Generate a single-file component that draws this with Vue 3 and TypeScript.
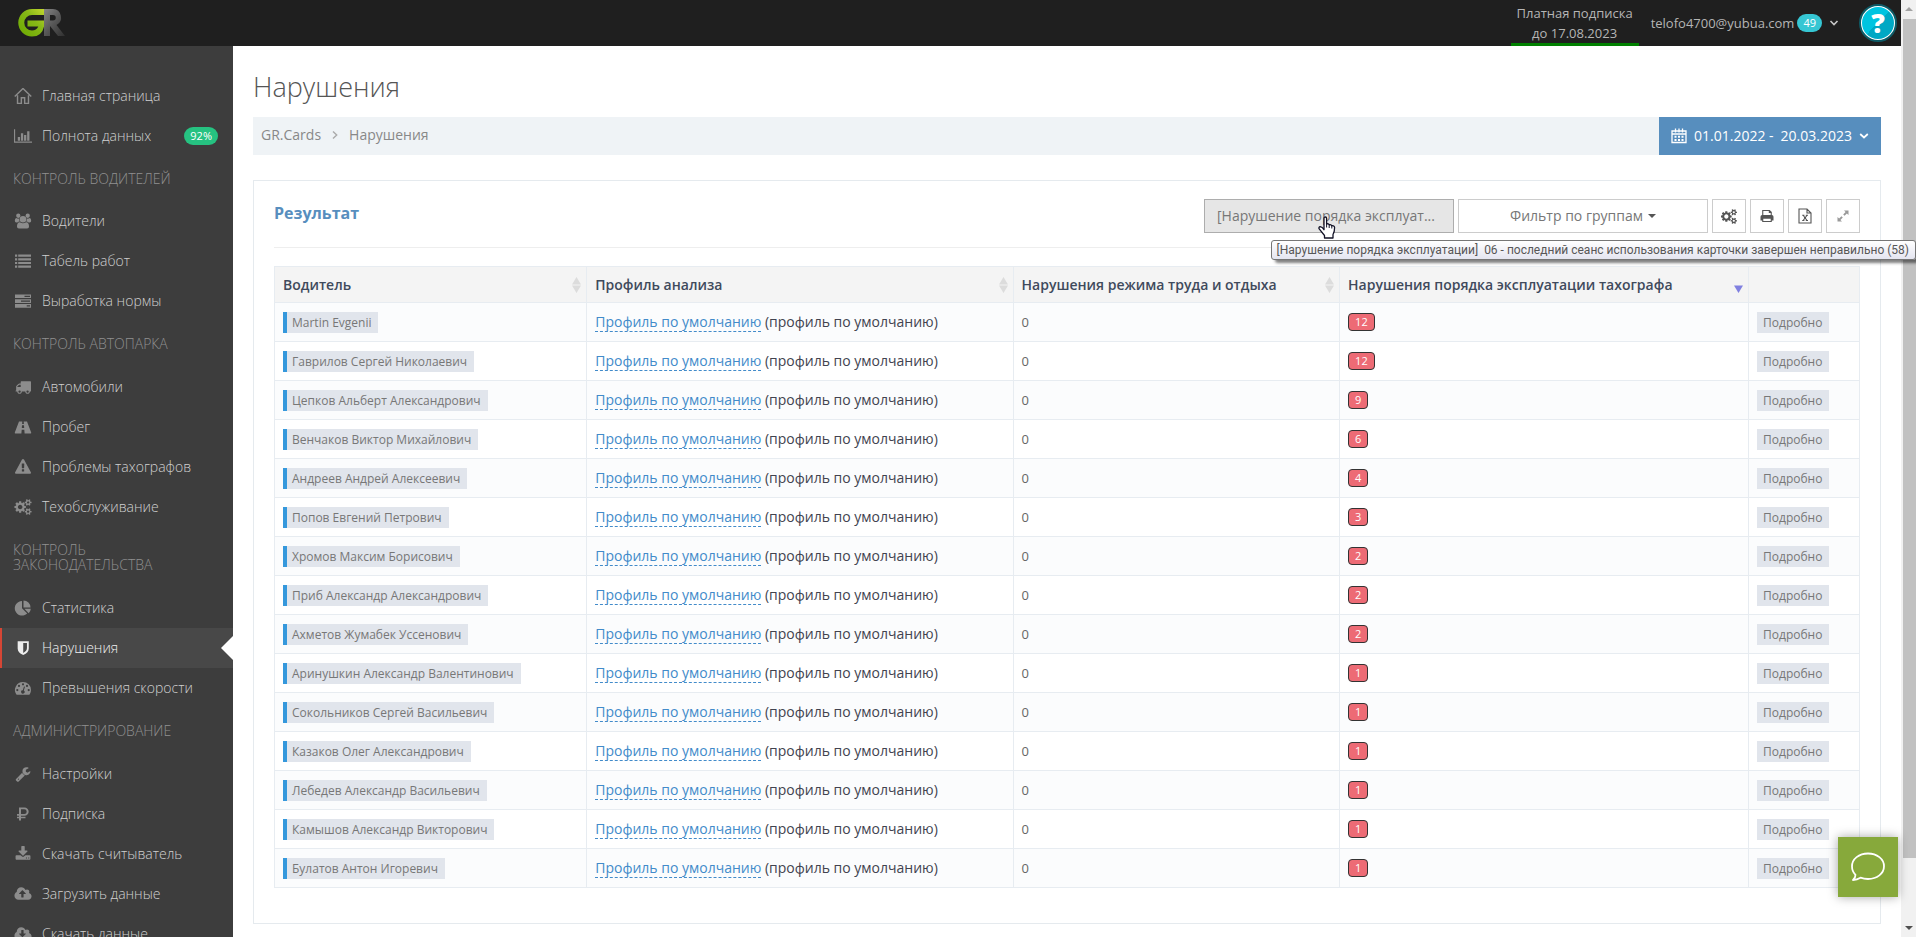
<script setup lang="ts">
import { ref } from 'vue'

type Item = { label: string; icon: string; badge?: string; active?: boolean }
type Group = { title?: string; items: Item[] }

const COGS_GEAR =
  'M896 896q0-106-75-181t-181-75-181 75-75 181 75 181 181 75 181-75 75-181zm768 512q0-52-38-90t-90-38-90 38-38 90q0 53 37.5 90.5t90.5 37.5 90.5-37.5 37.5-90.5zm0-1024q0-52-38-90t-90-38-90 38-38 90q0 53 37.5 90.5t90.5 37.5 90.5-37.5 37.5-90.5zm-384 421v185q0 10-7 19.5t-16 10.5l-155 24q-11 35-32 76 34 48 90 115 7 11 7 20 0 12-7 19-23 30-82.5 89.5t-78.5 59.5q-11 0-21-7l-115-90q-37 19-77 31-11 108-23 155-7 24-30 24h-186q-11 0-20-7.5t-10-17.5l-23-153q-34-10-75-31l-118 89q-7 7-20 7-11 0-21-8-144-133-144-160 0-9 7-19 10-14 41-53t47-61q-23-44-35-82l-152-24q-10-1-17-9.5t-7-19.5v-185q0-10 7-19.5t16-10.5l155-24q11-35 32-76-34-48-90-115-7-11-7-20 0-12 7-20 22-30 82-89t79-59q11 0 21 7l115 90q34-18 77-32 11-108 23-154 7-24 30-24h186q11 0 20 7.5t10 17.5l23 153q34 10 75 31l118-89q8-7 20-7 11 0 21 8 144 133 144 160 0 8-7 19-12 16-42 54t-45 60q23 48 34 82l152 23q10 2 17 10.5t7 19.5zm640 533v140q0 16-149 31-12 27-30 52 51 113 51 138 0 4-4 7-122 71-124 71-8 0-46-47t-52-68q-20 2-30 2t-30-2q-14 21-52 68t-46 47q-2 0-124-71-4-3-4-7 0-25 51-138-18-25-30-52-149-15-149-31v-140q0-16 149-31 13-29 30-52-51-113-51-138 0-4 4-7 4-2 35-20t59-34 30-16q8 0 46 46.5t52 67.5q20-2 30-2t30 2q51-71 92-112l6-2q4 0 124 70 4 3 4 7 0 25-51 138 17 23 30 52 149 15 149 31zm0-1024v140q0 16-149 31-12 27-30 52 51 113 51 138 0 4-4 7-122 71-124 71-8 0-46-47t-52-68q-20 2-30 2t-30-2q-14 21-52 68t-46 47q-2 0-124-71-4-3-4-7 0-25 51-138-18-25-30-52-149-15-149-31v-140q0-16 149-31 13-29 30-52-51-113-51-138 0-4 4-7 4-2 35-20t59-34 30-16q8 0 46 46.5t52 67.5q20-2 30-2t30 2q51-71 92-112l6-2q4 0 124 70 4 3 4 7 0 25-51 138 17 23 30 52 149 15 149 31z'
const CLOUD =
  'm640 288q0 159-112.5 271.5t-271.5 112.5h-1088q-185 0-316.5-131.5t-131.5-316.5q0-130 70-240t188-165q-2-30-2-43 0-212 150-362t362-150q156 0 285.5 87t188.5 231q71-62 166-62 106 0 181 75t75 181q0 76-41 138 130 31 213.5 135.5t83.5 238.5z'

const icons: Record<string, { box: string; d: string; line?: boolean }> = {
  home: { box: '0.5 1.500 17 15.500', line: true, d: 'M1 9.700 9 2l8 7.700M3.700 8.500v7.900h3.700V11h3.200v5.400h3.700V8.500' },
  chart: { box: '0 0 19 16', d: 'M0 1h1.200v12.800H19V15H0zM4 9h2.400v4H4zM7.300 5h2.400v8H7.300zM10.600 7H13v6h-2.400zM13.900 3h2.400v10h-2.400zM4 9z' },
  users: { box: '0 0 18 17', d: 'M9 3.200a3.500 3.500 0 1 1 0 7 3.500 3.500 0 0 1 0-7zM4 .6a2.300 2.300 0 1 1 0 4.600 2.300 2.300 0 0 1 0-4.600zM14 .6a2.300 2.300 0 1 1 0 4.600 2.300 2.300 0 0 1 0-4.600zM2 5.300q2 1.300 3 .2a4.600 4.600 0 0 0 .6 3.500Q4 9 3 10H1.800Q.3 10 .3 8.300q0-2.800 1.700-3zM16 5.300q-2 1.300-3 .2a4.600 4.600 0 0 1-.6 3.500q1.600 0 2.600 1h1.200q1.500 0 1.500-1.700 0-2.800-1.700-3zM5.600 9.700q3.400 2.400 6.800 0 3 .2 3 4.700 0 2.200-2 2.200H4.600q-2 0-2-2.200 0-4.500 3-4.700z' },
  list: { box: '0 0 18 16', d: 'M1 1.500h2.200v2.200H1zM1 5.200h2.200v2.200H1zM1 8.900h2.200v2.200H1zM1 12.600h2.200v2.200H1zM4.200 1.500H17v2.200H4.200zM4.200 5.200H17v2.200H4.200zM4.200 8.900H17v2.200H4.200zM4.200 12.600H17v2.200H4.200z' },
  tasks: { box: '0 0 18 16', d: 'M1 1.500h16v3.600H1zM10.500 2.700v1.200h5.500V2.700zM1 6.300h16v3.600H1zM7 7.500v1.200h9V7.500zM1 11.100h16v3.600H1zM12.700 12.300v1.200H16v-1.200z' },
  truck: { box: '0 0 1792 1792', d: 'M640 1408q0-52-38-90t-90-38-90 38-38 90 38 90 90 38 90-38 38-90zm-384-512h384v-256h-158q-13 0-22 9l-195 195q-9 9-9 22v30zm1280 512q0-52-38-90t-90-38-90 38-38 90 38 90 90 38 90-38 38-90zm256-1088v1024q0 15-4 26.500t-13.500 18.500-16.500 11.500-23.500 6-22.500 2-25.500 0-22.500-.5q0 106-75 181t-181 75-181-75-75-181h-384q0 106-75 181t-181 75-181-75-75-181h-64q-3 0-22.500.5t-25.500 0-22.500-2-23.500-6-16.500-11.500-13.500-18.500-4-26.500q0-26 19-45t45-19v-320q0-8-.5-35t0-38 2.500-34.500 6.500-37 14-30.500 22.500-30l198-198q19-19 50.500-32t58.500-13h160v-192q0-26 19-45t45-19h1024q26 0 45 19t19 45z' },
  road: { box: '0 0 18 16', d: 'M5 2.500h3.300L8.100 5h1.800l-.2-2.500H13l4.200 11q.3 1-.6 1h-6l-.3-3.700H7.700l-.3 3.700h-6q-.9 0-.6-1zM8 6.200 7.800 9h2.400L10 6.200z' },
  warning: { box: '0 0 1792 1792', d: 'M1024 1375v-190q0-14-9.500-23.500t-22.500-9.500h-192q-13 0-22.500 9.500t-9.500 23.500v190q0 14 9.500 23.500t22.500 9.500h192q13 0 22.500-9.500t9.500-23.500zm-2-374l18-459q0-12-10-19-13-11-24-11h-220q-11 0-24 11-10 7-10 21l17 457q0 10 10 16.500t24 6.500h185q14 0 23.500-6.500t10.500-16.500zm-14-934l768 1408q35 63-2 126-17 29-46.500 46t-63.500 17h-1536q-34 0-63.500-17t-46.500-46q-37-63-2-126l768-1408q17-31 47-49t65-18 65 18 47 49z' },
  cogs: { box: '0 0 1920 1792', d: COGS_GEAR },
  pie: { box: '0 0 18 16', d: 'M8 1v7.300l5.200 5.200A7.300 7.300 0 1 1 8 1zM9.500.5a7 7 0 0 1 7 7h-7zM10.400 8.700h6.400a7 7 0 0 1-2.100 4.500z' },
  shield: { box: '0 0 18 18', d: 'M3 1.500h12.500v8q0 4.500-6.250 7.500Q3 14 3 9.500zM9.250 3.500v11q4.200-2.200 4.200-5.500V3.500z' },
  gauge: { box: '0 0 18 16', d: 'M9 2a8 8 0 0 1 8 8q0 2.400-1.200 4.300-.2.400-.7.400H2.900q-.5 0-.7-.4A8 8 0 0 1 9 2zM9 3.200a1.100 1.100 0 1 0 0 2.200 1.100 1.100 0 0 0 0-2.200zM5 4.800A1.100 1.100 0 1 0 5 7a1.100 1.100 0 0 0 0-2.200zM13 4.800A1.100 1.100 0 1 0 13 7a1.100 1.100 0 0 0 0-2.200zM3.300 9a1.100 1.100 0 1 0 0 2.200 1.100 1.100 0 0 0 0-2.200zM14.700 9a1.100 1.100 0 1 0 0 2.200 1.100 1.100 0 0 0 0-2.200zM10 6.500 8.800 10.200a1.700 1.700 0 1 0 1 .3L11 6.800z' },
  wrench: { box: '0 0 1792 1792', d: 'M448 1472q0-26-19-45t-45-19-45 19-19 45 19 45 45 19 45-19 19-45zm644-420l-682 682q-37 37-90 37-52 0-91-37l-106-108q-38-36-38-90 0-53 38-91l681-681q39 98 114.500 173.500t173.500 114.500zm634-435q0 39-23 106-47 134-164.500 217.500t-258.500 83.500q-185 0-316.500-131.500t-131.500-316.500 131.500-316.500 316.500-131.500q58 0 121.500 16.500t107.500 46.500q16 11 16 28t-16 28l-293 169v224l193 107q5-3 79-48.500t135.500-81 70.500-35.500q15 0 23.500 10t8.500 25z' },
  ruble: { box: '0 0 18 16', d: 'M5 1.500h5.500a4 4 0 0 1 0 8.300H7v1h4.500v1.500H7v2.200H5v-2.200H3v-1.500h2v-1H3V8.100h2zM7 3.300v4.800h3.300a2.400 2.400 0 0 0 0-4.800z' },
  download: { box: '0 0 1792 1792', d: 'M1344 1344q0-26-19-45t-45-19-45 19-19 45 19 45 45 19 45-19 19-45zm256 0q0-26-19-45t-45-19-45 19-19 45 19 45 45 19 45-19 19-45zm128-224v320q0 40-28 68t-68 28h-1472q-40 0-68-28t-28-68v-320q0-40 28-68t68-28h465l135 136q58 56 136 56t136-56l136-136h464q40 0 68 28t28 68zm-325-569q17 41-14 70l-448 448q-18 19-45 19t-45-19l-448-448q-31-29-14-70 17-39 59-39h256v-448q0-26 19-45t45-19h256q26 0 45 19t19 45v448h256q42 0 59 39z' },
  upcloud: { box: '0 0 1920 1792', d: 'M1280 864q0-14-9-23l-352-352q-9-9-23-9t-23 9l-351 351q-10 12-10 24 0 14 9 23t23 9h224v352q0 13 9.500 22.500t22.500 9.500h192q13 0 22.500-9.500t9.500-22.500v-352h224q13 0 22.500-9.500t9.500-22.500z' + CLOUD },
  downcloud: { box: '0 0 1920 1792', d: 'M1280 864q0 14-9 23l-352 352q-9 9-23 9t-23-9l-352-352q-9-12-9-23 0-32 32-32h224V480q0-32 32-32h192q32 0 32 32v352h224q32 0 32 32z' + CLOUD },
}

const groups: Group[] = [
  { items: [{ label: 'Главная страница', icon: 'home' }, { label: 'Полнота данных', icon: 'chart', badge: '92%' }] },
  {
    title: 'КОНТРОЛЬ ВОДИТЕЛЕЙ',
    items: [{ label: 'Водители', icon: 'users' }, { label: 'Табель работ', icon: 'list' }, { label: 'Выработка нормы', icon: 'tasks' }],
  },
  {
    title: 'КОНТРОЛЬ АВТОПАРКА',
    items: [
      { label: 'Автомобили', icon: 'truck' },
      { label: 'Пробег', icon: 'road' },
      { label: 'Проблемы тахографов', icon: 'warning' },
      { label: 'Техобслуживание', icon: 'cogs' },
    ],
  },
  {
    title: 'КОНТРОЛЬ ЗАКОНОДАТЕЛЬСТВА',
    items: [
      { label: 'Статистика', icon: 'pie' },
      { label: 'Нарушения', icon: 'shield', active: true },
      { label: 'Превышения скорости', icon: 'gauge' },
    ],
  },
  {
    title: 'АДМИНИСТРИРОВАНИЕ',
    items: [
      { label: 'Настройки', icon: 'wrench' },
      { label: 'Подписка', icon: 'ruble' },
      { label: 'Скачать считыватель', icon: 'download' },
      { label: 'Загрузить данные', icon: 'upcloud' },
      { label: 'Скачать данные', icon: 'downcloud' },
    ],
  },
]

const rows = ref<{ name: string; count: number }[]>([
  { name: 'Martin Evgenii', count: 12 },
  { name: 'Гаврилов Сергей Николаевич', count: 12 },
  { name: 'Цепков Альберт Александрович', count: 9 },
  { name: 'Венчаков Виктор Михайлович', count: 6 },
  { name: 'Андреев Андрей Алексеевич', count: 4 },
  { name: 'Попов Евгений Петрович', count: 3 },
  { name: 'Хромов Максим Борисович', count: 2 },
  { name: 'Приб Александр Александрович', count: 2 },
  { name: 'Ахметов Жумабек Уссенович', count: 2 },
  { name: 'Аринушкин Александр Валентинович', count: 1 },
  { name: 'Сокольников Сергей Васильевич', count: 1 },
  { name: 'Казаков Олег Александрович', count: 1 },
  { name: 'Лебедев Александр Васильевич', count: 1 },
  { name: 'Камышов Александр Викторович', count: 1 },
  { name: 'Булатов Антон Игоревич', count: 1 },
])

const columns = ['Водитель', 'Профиль анализа', 'Нарушения режима труда и отдыха', 'Нарушения порядка эксплуатации тахографа']
</script>

<template>
  <div class="shell">
    <div class="app">
      <header class="topbar">
        <a href="#" class="logo" aria-label="GR">
          <svg width="48" height="28" viewBox="0 0 48 28">
            <defs>
              <linearGradient id="logoGreen" x1="0" y1="1" x2="1" y2="0">
                <stop offset="0" stop-color="#6aa800" /><stop offset=".6" stop-color="#86b817" /><stop offset="1" stop-color="#c2d62e" />
              </linearGradient>
              <linearGradient id="logoGrey" x1="0" y1="0" x2="1" y2="1">
                <stop offset="0" stop-color="#858585" /><stop offset=".5" stop-color="#565656" /><stop offset="1" stop-color="#303030" />
              </linearGradient>
            </defs>
            <path fill="url(#logoGreen)" d="M14 0h12v6H14a7.600 7.600 0 0 0 0 15.500q4.500 0 6.300-4H9.500v-6H26v6Q24 27.500 14 27.500A13.700 13.700 0 0 1 14 0z" />
            <path fill="url(#logoGrey)" fill-rule="evenodd" d="M26 0h9a8.500 8.500 0 0 1 3.500 16L47 27h-7l-8-10v10h-6zM32 6v5.500h3a2.700 2.700 0 0 0 0-5.500z" />
          </svg>
        </a>
        <div class="topright">
          <a href="#" class="subscription"><span>Платная подписка</span><span>до 17.08.2023</span></a>
          <button class="user" type="button">
            <span>telofo4700@yubua.com</span><span class="count">49</span>
            <svg width="10" height="8" viewBox="0 0 10 8"><path d="M1.500 2 5 5.500 8.500 2" /></svg>
          </button>
          <button class="help" type="button" aria-label="Помощь">?</button>
        </div>
      </header>

      <div class="body">
        <nav class="sidebar">
          <template v-for="(g, gi) in groups" :key="gi">
            <h3 v-if="g.title">{{ g.title }}</h3>
            <ul>
              <li v-for="it in g.items" :key="it.label">
                <a href="#" :class="{ active: it.active }">
                  <svg class="icon" :viewBox="icons[it.icon].box"><path :d="icons[it.icon].d" :class="{ line: icons[it.icon].line }" fill-rule="evenodd" /></svg>
                  <span class="label">{{ it.label }}</span>
                  <span v-if="it.badge" class="percent">{{ it.badge }}</span>
                </a>
              </li>
            </ul>
          </template>
        </nav>

        <main>
          <h1>Нарушения</h1>
          <div class="crumbbar">
            <div class="crumbs">
              <a href="#">GR.Cards</a>
              <svg width="6" height="10" viewBox="0 0 6 10"><path d="M1 1.500 4.700 5 1 8.500" /></svg>
              <a href="#">Нарушения</a>
            </div>
            <button class="dates" type="button">
              <svg width="16" height="16" viewBox="0 0 16 16">
                <path fill="none" stroke="#fff" stroke-width="1.300" d="M1 3h14v11.500H1zM1 6h14M4.500.5v4M8 .5v4M11.500.5v4" />
                <path fill="#fff" d="M3.500 7.700h2v2h-2zM7 7.700h2v2H7zM10.500 7.700h2v2h-2zM3.500 11h2v2h-2zM7 11h2v2H7zM10.500 11h2v2h-2z" />
              </svg>
              <span>01.01.2022 -</span><span class="to">20.03.2023</span>
              <svg width="10" height="8" viewBox="0 0 10 8"><path fill="none" stroke="#fff" stroke-width="1.700" d="M1.200 2 5 5.500 8.800 2" /></svg>
            </button>
          </div>

          <section class="card">
            <div class="cardhead">
              <h2>Результат</h2>
              <div class="tools">
                <div class="anchor">
                  <button class="filter hover" type="button" aria-describedby="tip"><span>[Нарушение порядка эксплуат...</span></button>
                  <svg class="cursor" width="18" height="23" viewBox="0 0 18 23">
                    <path fill="#fff" stroke="#111125" stroke-width="1.300" stroke-linejoin="round" d="M6 12V2.500Q6 1 7.300 1t1.300 1.500V8q2-.8 2.600.8 2-.6 2.500 1 2.600-.5 2.900 1.700 0 4.500-1.600 7V22H6.500v-2.500L1 12.700Q.6 11 2.200 10.700q2.200.2 3.800 3z" />
                    <path stroke="#111125" d="M8.600 8v3.500M11.200 9v3M13.800 10v2.500" />
                  </svg>
                </div>
                <button class="filter" type="button"><span>Фильтр по группам</span><i class="caret"></i></button>
                <button class="square" type="button" aria-label="Параметры"><svg width="16" height="15" viewBox="0 0 1920 1792"><path :d="icons.cogs.d" fill-rule="evenodd" /></svg></button>
                <button class="square" type="button" aria-label="Печать">
                  <svg width="14" height="14" viewBox="0 0 14 14"><path fill-rule="evenodd" d="M2.200 1h7.500l2.100 2.100V6q1.700 0 1.700 1.700v3.800h-1.700V13H2.200v-1.500H.5V7.700Q.5 6 2.200 6zM3.300 2v4h7.400V4H8.800V2zM3.300 9.700v2.200h7.400V9.700z" /></svg>
                </button>
                <button class="square" type="button" aria-label="Excel">
                  <svg width="14" height="16" viewBox="0 0 14 16"><path fill="none" stroke="#555" stroke-width="1.100" d="M1 1h8l4 4v10H1zM9 1v4h4M4.200 7.300h2.200M7.800 7.300h2.200M4.200 12.500h2.200M7.800 12.500h2.200M5.200 7.300l3.800 5.200M9 7.300l-3.800 5.200" /></svg>
                </button>
                <button class="square dim" type="button" aria-label="Развернуть">
                  <svg width="12" height="12" viewBox="0 0 12 12"><path d="M7 .5h4.500V5L9.900 3.400 7.500 5.800 6.200 4.500l2.400-2.400zM5 11.500H.5V7l1.600 1.600 2.400-2.400 1.300 1.300-2.400 2.400z" /></svg>
                </button>
              </div>
            </div>

            <table>
              <colgroup><col class="c1" /><col class="c2" /><col class="c3" /><col /><col class="c5" /></colgroup>
              <thead>
                <tr>
                  <th v-for="(c, i) in columns" :key="c" scope="col">
                    <div class="th">
                      <span>{{ c }}</span>
                      <svg v-if="i < 3" width="9" height="16" viewBox="0 0 9 16"><path fill="#dcdcdc" d="M0 7.500 4.500 0 9 7.500zM0 8.500h9L4.500 16z" /></svg>
                      <svg v-else width="9" height="16" viewBox="0 0 9 16"><path fill="#8080e0" d="M0 8.500h9L4.500 16z" /></svg>
                    </div>
                  </th>
                  <th scope="col"></th>
                </tr>
              </thead>
              <tbody>
                <tr v-for="r in rows" :key="r.name">
                  <td><span class="chip driver">{{ r.name }}</span></td>
                  <td><a href="#">Профиль по умолчанию</a> (профиль по умолчанию)</td>
                  <td class="zero">0</td>
                  <td><span class="badge">{{ r.count }}</span></td>
                  <td><button class="chip" type="button">Подробно</button></td>
                </tr>
              </tbody>
            </table>
          </section>
        </main>
      </div>
    </div>

    <div class="scroll" aria-hidden="true"><i class="up"></i><div class="thumb"></div><i class="down"></i></div>
    <div id="tip" class="tip" role="tooltip"><span>[Нарушение порядка эксплуатации]</span><span>06 - последний сеанс использования карточки завершен неправильно (58)</span></div>
    <button class="chat" type="button" aria-label="Чат">
      <svg width="36" height="30" viewBox="0 0 36 30"><path fill="none" stroke="#fff" stroke-width="1.800" stroke-linejoin="round" d="M18 1.500c9 0 16 5.500 16 12.800S27 27 18 27q-4 0-7.500-1.300Q7 28 3 28q2.500-2 2.500-5.200Q2 19.500 2 14.300C2 7 9 1.500 18 1.500z" /></svg>
    </button>
  </div>
</template>

<style>
html, body { margin: 0; background: #fff; }
</style>

<style scoped>
* { box-sizing: border-box; }
button { font: inherit; color: inherit; border: 0; padding: 0; background: none; cursor: pointer; }
a { text-decoration: none; color: inherit; }
.shell { display: flex; height: 100vh; overflow: hidden; font-family: "Open Sans", "Noto Sans", sans-serif; font-size: 14px; line-height: 20px; color: #333; }
.app { flex: 1; min-width: 0; display: flex; flex-direction: column; }
.topbar { height: 46px; flex: none; background: #1f1f1f; display: flex; justify-content: space-between; color: #b5b5b5; font-size: 13px; }
.logo { padding: 9px 0 0 18px; }
.logo svg { display: block; }
.topright { display: flex; padding-right: 5px; }
.subscription { padding: 3px 6px 0; border-bottom: 3px solid #008000; display: flex; flex-direction: column; text-align: center; }
.user { display: flex; align-items: center; margin-left: 12px; font-weight: 400; }
.count { margin-left: 3px; height: 18px; line-height: 18px; padding: 0 6px; border-radius: 9px; background: #36c6d3; color: #fff; font-size: 11px; }
.user svg { margin-left: 7px; fill: none; stroke: #c8c8c8; stroke-width: 1.6; }
.help { margin: 5px 0 0 21px; width: 36px; height: 36px; border-radius: 50%; border: 2px solid #fff; outline: 2px solid #0d5a66; outline-offset: -1px; background: linear-gradient(135deg, #00c4e0 50%, #00a8c4 50%); color: #fff; font-size: 27px; line-height: 30px; font-weight: 800; }
.body { flex: 1; display: flex; min-height: 0; }
.sidebar { width: 233px; flex: none; background: #3d3d3d; padding-top: 30px; overflow: hidden; }
.sidebar ul { list-style: none; margin: 0; padding: 0; }
.sidebar h3 { margin: 0; padding: 15px 13px; font-size: 14px; line-height: 15px; font-weight: 300; color: #909090; }
.sidebar ul + h3 ~ h3 { padding-bottom: 16px; }
.sidebar a { display: flex; align-items: center; height: 40px; padding: 0 15px 0 14px; color: #d0d0d0; font-weight: 300; position: relative; }
.icon { width: 18px; height: 16px; margin-right: 10px; fill: #8c8c8c; }
.icon .line { fill: none; stroke: #8c8c8c; stroke-width: 1.4; }
.label { flex: 1; }
.percent { background: #26c281; color: #fff; font-size: 11px; font-weight: 400; height: 18px; line-height: 18px; padding: 0 6px; border-radius: 9px; }
.sidebar a.active { background: #484848; color: #f1f1f1; border-left: 2px solid #d64635; padding-left: 12px; }
.active .icon { fill: #ececec; }
.active::after { content: ""; position: absolute; right: 0; top: 8px; border: 12px solid transparent; border-left-width: 0; border-right-color: #fff; }
main { flex: 1; min-width: 0; padding: 24px 20px 0; }
h1 { margin: 0; font-size: 27px; line-height: 34px; font-weight: 300; color: #555; }
.crumbbar { margin-top: 13px; display: flex; justify-content: space-between; height: 38px; background: #eff3f6; }
.crumbs { display: flex; align-items: center; gap: 11px; padding: 0 0 3px 8px; color: #888; }
.crumbs svg { fill: none; stroke: #aaa; stroke-width: 1.4; }
.dates { display: flex; align-items: center; padding: 0 12px; background: #578ebe; color: #fff; }
.dates span { margin-left: 7px; }
.dates .to { margin-right: 7px; }
.card { margin-top: 25px; border: 1px solid #e5eaee; padding: 12px 20px 35px; }
.cardhead { display: flex; justify-content: space-between; height: 55px; padding-top: 6px; border-bottom: 1px solid #eee; }
h2 { margin: 0; padding-top: 4px; font-size: 16px; line-height: 20px; font-weight: 700; color: #578ebe; }
.tools { display: flex; gap: 4px; color: #777; }
.filter { width: 250px; height: 34px; border: 1px solid #ccc; background: #fff; padding: 0 12px; display: flex; align-items: center; justify-content: center; white-space: nowrap; }
.hover { background: #e6e6e6; border-color: #adadad; justify-content: flex-start; }
.anchor { position: relative; }
.cursor { position: absolute; left: 114px; top: 17px; }
.caret { margin-left: 5px; border: 4px solid transparent; border-top-color: #555; border-bottom: 0; }
.square { width: 34px; height: 34px; border: 1px solid #ccc; background: #fff; display: flex; align-items: center; justify-content: center; fill: #555; }
.dim { fill: #999; }
table { margin-top: 18px; width: 100%; table-layout: fixed; border-collapse: collapse; color: #42434f; }
.c1 { width: 19.7%; }
.c2 { width: 26.9%; }
.c3 { width: 20.6%; }
.c5 { width: 7%; }
th, td { border: 1px solid #e7ecf1; padding: 0 8px; text-align: left; height: 39px; white-space: nowrap; }
th { height: 36px; background: #f4f4f4; font-weight: 600; color: #3f4a5c; }
.th { display: flex; justify-content: space-between; align-items: center; }
.th svg { margin-right: -3px; }
tbody tr:nth-child(odd) { background: #fbfcfd; }
td a { color: #428bca; border-bottom: 1px dashed #428bca; }
.zero { font-size: 13px; color: #666; }
.chip { display: block; width: fit-content; height: 21px; line-height: 21px; padding: 0 7px 0 6px; background: #e1e5ec; color: #777; font-size: 12px; }
.driver { border-left: 4px solid #3598dc; padding-left: 5px; }
.badge { display: block; width: fit-content; height: 18px; line-height: 16px; padding: 0 6px; border: 1px solid #333; border-radius: 4px; background: #ed6b75; color: #fff; font-size: 11px; }
.scroll { width: 15px; flex: none; background: #f1f1f1; display: flex; flex-direction: column; align-items: center; justify-content: space-between; }
.thumb { flex: 1; align-self: stretch; margin: 8px 0 68px 2px; background: #c1c1c1; }
.up { margin-top: 7px; border: 4px solid transparent; border-top: 0; border-bottom-color: #a3a3a3; }
.down { margin-bottom: 7px; border: 4px solid transparent; border-bottom: 0; border-top-color: #505050; }
.tip { position: absolute; right: 0; top: 240px; display: flex; gap: 6px; height: 20px; line-height: 18px; padding: 0 6px 0 5px; border: 1px solid #767676; border-radius: 3px; background: linear-gradient(#fff, #e4e5f0); box-shadow: 4px 3px 3px rgba(0, 0, 0, .5); color: #575757; font-family: Roboto, "Open Sans", sans-serif; font-size: 12px; white-space: nowrap; }
.chat { position: absolute; right: 18px; bottom: 40px; width: 60px; height: 60px; background: #87a93b; box-shadow: 0 0 10px rgba(0, 0, 0, .35); display: flex; align-items: center; justify-content: center; }
</style>
